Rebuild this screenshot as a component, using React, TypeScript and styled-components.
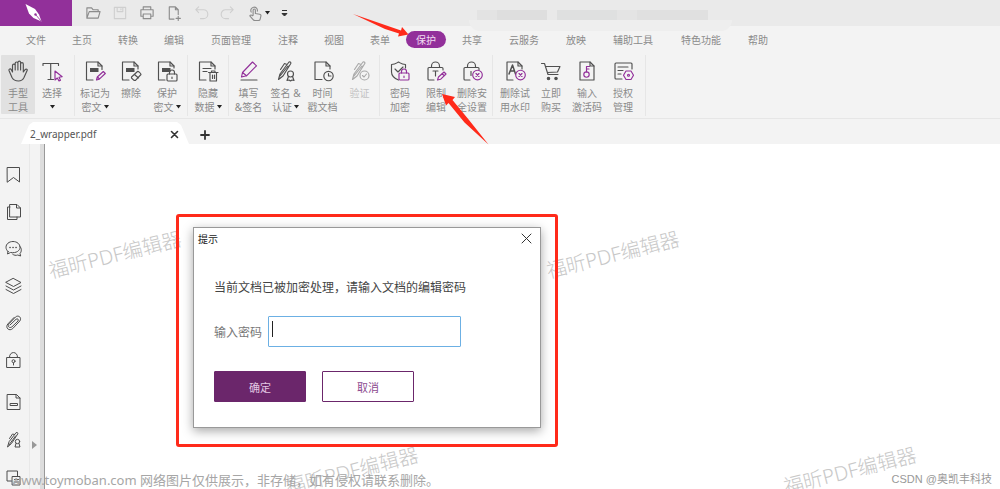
import React from "react";
import styled, { createGlobalStyle, css } from "styled-components";

const PURPLE = "#92309a";
const INK = "#505050";
const RED = "#ff2a1a";

const Global = createGlobalStyle`
  * { box-sizing: border-box; }
  body { margin: 0; background: #fff; font-family: "Noto Sans", "Noto Sans CJK SC", sans-serif; }
  button, input { font: inherit; color: inherit; }
  button { border: 0; padding: 0; background: none; }
`;

const Page = styled.div`
  position: relative;
  display: flex;
  flex-direction: column;
  height: 100vh;
  overflow: hidden;
`;

const TitleBar = styled.header`
  position: relative;
  display: flex;
  height: 26px;
  background: #eaeaea;
`;

const Brand = styled.div`
  display: flex;
  justify-content: center;
  align-items: center;
  width: 72px;
  padding-right: 4px;
  background: ${PURPLE};
`;

const QuickTools = styled.div`
  display: flex;
  align-items: center;
  gap: 11px;
  padding-left: 13px;
`;

const QuickButton = styled.button<{ $faded?: boolean }>`
  display: flex;
  align-items: center;
  gap: 2px;
  height: 16px;
  color: ${(p) => (p.$faded ? "#cfcfcf" : "#8c8c8c")};
`;

const Smudge = styled.div`
  position: absolute;
  left: 469px;
  top: 20px;
  width: 263px;
  height: 11px;
  background: #eeeeee;
  border-radius: 0 0 20px 20px;
`;

const SmudgeBlocks = styled.div`
  position: absolute;
  left: 477px;
  top: 10px;
  display: flex;
  width: 231px;
  height: 10px;
`;

const SmudgeBlock = styled.span<{ $tone: string; $grow: number }>`
  flex: ${(p) => p.$grow};
  background: ${(p) => p.$tone};
`;

const Menu = styled.nav`
  display: flex;
  align-items: center;
  height: 27px;
  padding-left: 13px;
  background: #f3f3f3;
`;

const MenuItem = styled.button<{ $active?: boolean; $long?: boolean }>`
  height: 17px;
  margin: 0 3px;
  padding: 0 ${(p) => (p.$long ? 11 : 10)}px;
  border-radius: 9px;
  font-size: 10px;
  line-height: 16px;
  white-space: nowrap;
  color: #8a8a8a;
  ${(p) => p.$active && css`background: ${PURPLE}; color: #f0dcf2;`}
`;

const Ribbon = styled.div`
  display: flex;
  height: 66px;
  padding: 2px 0 2px 1px;
  background: #f3f3f3;
  border-bottom: 1px solid #e6e6e6;
`;

const Group = styled.div<{ $pad: string; $item: number }>`
  display: flex;
  padding: ${(p) => p.$pad};
  border-right: 1px solid #e6e6e6;
  > button { width: ${(p) => p.$item}px; }
`;

const Tool = styled.button<{ $active?: boolean; $disabled?: boolean }>`
  display: flex;
  flex-direction: column;
  align-items: center;
  height: 59px;
  padding-top: 5px;
  border-radius: 1px;
  color: ${INK};
  background: ${(p) => (p.$active ? "#e1e1e1" : "none")};
  opacity: ${(p) => (p.$disabled ? 0.45 : 1)};
`;

const Label = styled.span`
  display: flex;
  align-items: center;
  gap: 2px;
  height: 14px;
  font-size: 10px;
  line-height: 14px;
  white-space: nowrap;
  color: #8a8a8a;
  &:first-of-type { margin-top: 4px; }
`;

const TabStrip = styled.div`
  display: flex;
  align-items: flex-end;
  height: 25px;
  padding-left: 21px;
  background: #f3f3f3;
`;

const Tab = styled.div`
  display: flex;
  align-items: center;
  justify-content: space-between;
  width: 168px;
  height: 22px;
  padding: 2px 10px 0 9px;
  background: #fff;
  clip-path: polygon(0 100%, 8px 3px, 12px 0, 156px 0, 160px 3px, 100% 100%);
  font-size: 10px;
  color: #555;
`;

const IconButton = styled.button`
  display: flex;
  color: #333;
`;

const NewTab = styled(IconButton)`
  margin: 0 0 4px 11px;
`;

const Work = styled.div`
  display: flex;
  flex: 1;
  min-height: 0;
`;

const SideBar = styled.aside`
  display: flex;
  flex-direction: column;
  gap: 25px;
  width: 30px;
  padding: 22px 0 0 5px;
  background: #f3f3f3;
  border-right: 1px solid #e8e8e8;
`;

const SideList = styled.div<{ $gap: number }>`
  display: flex;
  flex-direction: column;
  gap: ${(p) => p.$gap}px;
`;

const SideButton = styled(IconButton)`
  color: #4c4c4c;
`;

const Gutter = styled.div`
  display: flex;
  align-items: flex-end;
  width: 15px;
  padding: 0 0 40px 2px;
  background: #f3f3f3;
  border-right: 1px solid #999;
  box-shadow: inset -4px 0 #dddddd;
  color: #999;
`;

const Canvas = styled.main`
  position: relative;
  flex: 1;
  overflow: hidden;
  background: #fff;
`;

const Watermark = styled.span<{ $x: number; $y: number }>`
  position: absolute;
  left: ${(p) => p.$x}px;
  top: ${(p) => p.$y}px;
  font-size: 20px;
  font-weight: 300;
  line-height: 28px;
  white-space: nowrap;
  color: #c8c8c8;
  transform: translate(-50%, -50%) rotate(-14deg);
`;

const Highlight = styled.div`
  position: absolute;
  left: 131px;
  top: 70px;
  padding: 10px 14px 16px 14px;
  border: 3px solid ${RED};
  border-radius: 3px;
`;

const Dialog = styled.section`
  width: 348px;
  border: 1px solid #999;
  background: #fff;
  box-shadow: 0 3px 10px rgba(0, 0, 0, 0.35);
`;

const DialogHead = styled.div`
  display: flex;
  align-items: center;
  justify-content: space-between;
  height: 21px;
  padding: 0 8px 0 4px;
  font-size: 10px;
  color: #222;
`;

const DialogForm = styled.form`
  padding: 30px 20px 25px;
  font-size: 12px;
`;

const Message = styled.p`
  margin: 0 0 19px;
  line-height: 18px;
  white-space: nowrap;
  color: #444;
`;

const Field = styled.label`
  display: flex;
  align-items: center;
  gap: 6px;
  color: #777;
`;

const Password = styled.input`
  width: 193px;
  height: 31px;
  padding: 0 4px;
  border: 1px solid #6cb0e4;
  border-radius: 1px;
  outline: 0;
  background: transparent;
`;

const FieldBox = styled.span`
  position: relative;
  display: flex;
`;

const Caret = styled.i`
  position: absolute;
  left: 4px;
  top: 5px;
  width: 1px;
  height: 16px;
  background: #222;
`;

const Actions = styled.div`
  display: flex;
  gap: 16px;
  margin-top: 24px;
`;

const Action = styled.button<{ $primary?: boolean }>`
  width: 92px;
  height: 31px;
  border: 1px solid #6b266b;
  border-radius: 1px;
  font-size: 11px;
  background: ${(p) => (p.$primary ? "#6b266b" : "#fff")};
  color: ${(p) => (p.$primary ? "#e2c6e2" : "#8d4a8f")};
`;

const SiteNote = styled.p`
  position: absolute;
  left: 11px;
  bottom: 0;
  margin: 0;
  font-size: 13px;
  line-height: 18px;
  white-space: nowrap;
  color: #a6a6a6;
`;

const Credit = styled.p`
  position: absolute;
  right: 8px;
  bottom: 2px;
  margin: 0;
  font-family: "Liberation Sans", "Noto Sans CJK SC", sans-serif;
  font-size: 11px;
  line-height: 16px;
  white-space: nowrap;
  color: #999;
`;

const Arrow = styled.svg<{ $x: number; $y: number }>`
  position: absolute;
  left: ${(p) => p.$x}px;
  top: ${(p) => p.$y}px;
`;

type Kids = { children: React.ReactNode };

const Glyph = ({ size = 22, box = 22, w = 1.15, children }: Kids & { size?: number; box?: number; w?: number }) => (
  <svg width={size} height={size} viewBox={`0 0 ${box} ${box}`} fill="none" stroke="currentColor" strokeWidth={w} strokeLinejoin="round" strokeLinecap="round" aria-hidden>
    {children}
  </svg>
);

const Down = () => (
  <svg width="5" height="4" viewBox="0 0 5 4" aria-hidden><path d="M0 0h5L2.500 3.500z" fill="#222" /></svg>
);

const DocBase = ({ end }: { end: string }) => (
  <>
    <path d={end} />
    <path d="M14 2v4h4" />
  </>
);

const Pen = () => (
  <path d="M14 2c1.500-.5 2.500.8 1.500 2L8 16l-4.500 3.500L5 14zM12 4.500l-2.500-1-4 6M13 6l-8 10" />
);

const Rosette = () => (
  <g>
    <circle cx="15.500" cy="14" r="3" />
    <path d="m13.500 16.500-1.500 4 2-.5 1.500 1 1.500-1 2 .5-1.500-4" />
  </g>
);

const Lock = ({ x, y }: { x: number; y: number }) => (
  <g transform={`translate(${x} ${y})`}>
    <rect x="0" y="4" width="10" height="7" rx="1" />
    <path d="M2.500 4V2.500a2.500 2.500 0 0 1 5 0V4M5 7v1.500" />
  </g>
);

const BigLock = () => (
  <>
    <path d="M9 20H4a1 1 0 0 1-1-1V8.500a1 1 0 0 1 1-1h13a1 1 0 0 1 1 1V10" />
    <path d="M6.500 7.500V6a4 4 0 0 1 8 0v1.500" />
  </>
);

const CrossBadge = () => (
  <g stroke={PURPLE}>
    <circle cx="16.500" cy="15" r="4.800" />
    <path d="m15 13.500 3 3m0-3-3 3" />
  </g>
);

const icons: Record<string, React.ReactNode> = {
  hand: (
    <path d="M5.500 12V5.500a1.300 1.300 0 0 1 2.700 0V10 3.300a1.300 1.300 0 0 1 2.700 0V10 2.500a1.300 1.300 0 0 1 2.700 0V10 4a1.300 1.300 0 0 1 2.700 0v8l1.800-2.300c1-1.200 2.700-.4 2 .9L17 17.500c-1 2-2.600 3.500-5.500 3.500-3.500 0-5.200-1.200-6.500-3.500L2 10.500c-.5-1.500 1.500-2.300 2.200-1L5.500 12" />
  ),
  select: (
    <>
      <path d="M2 5.500V3.500h15.500v2M9.700 3.500v16M7 19.500h5.500" />
      <path d="M14 11v9l2.300-2 1.700 3 1.500-.8-1.500-2.900 3.200-.6z" stroke={PURPLE} />
    </>
  ),
  mark: (
    <>
      <DocBase end="M9 20H2.500V2H14l4 4v3.500" />
      <path d="M6 8h8.500v4H6z" fill={INK} stroke="none" />
      <path d="m12.500 20 .8-3 6-5.500 2 2-6 5.700zM13.500 17l2 2" stroke={PURPLE} />
    </>
  ),
  erase: (
    <>
      <DocBase end="M9 20H2.500V2H14l4 4v3" />
      <path d="M6 8h8.500v4H6z" fill={INK} stroke="none" />
      <path d="m11.500 17 6-5.500c.7-.6 3.500 2 3.500 3l-5.500 5.800h-1.500l-2.500-2.300zM14.500 14.500l4 3.500" />
    </>
  ),
  guard: (
    <>
      <DocBase end="M9 20H2.500V2H14l4 4v2" />
      <path d="M6 8h8.500v4H6z" fill={INK} stroke="none" />
      <Lock x={11} y={10} />
    </>
  ),
  hide: (
    <>
      <DocBase end="M9 20H2.500V2H14l4 4v3" />
      <path d="M6 8.500h8M6 11.500h4M11.500 12.500h9.500M14.500 12.500V11h3.500v1.500M13 12.500V21h6.500v-8.500M15.500 15v3.500M17.500 15v3.500" />
    </>
  ),
  fill: (
    <>
      <path d="m3.500 17 1-4.500 10-10.500 4 3.800-10 10zM4.500 12.500l4 3.300" stroke={PURPLE} />
      <path d="M3 20h16" />
    </>
  ),
  sign: (
    <>
      <Pen />
      <Rosette />
    </>
  ),
  time: (
    <>
      <DocBase end="M10 19.500H3V2h11l4 4v3" />
      <circle cx="16.500" cy="16" r="4.700" />
      <path d="M16.500 13.500V16H19" />
    </>
  ),
  verify: (
    <>
      <Pen />
      <circle cx="15.500" cy="15.500" r="4.500" />
      <path d="m13.500 15.500 1.500 1.500 2.500-3" />
    </>
  ),
  shield: (
    <>
      <path d="M9.500 20C4.500 18 2.500 16 2.500 12V4.500C6 4.500 7 3.500 9.500 2 12 3.500 13 4.500 16.500 4.500V8M6 9l3 3 5-5" />
      <g stroke={PURPLE}><Lock x={10} y={9} /></g>
    </>
  ),
  limit: (
    <>
      <BigLock />
      <path d="M8 11h5M10.500 11v5" />
      <path d="m12.500 20 1-3 5.500-5 2 2-5.500 5.300zM17 13.500l2 2" stroke={PURPLE} />
    </>
  ),
  unlock: (
    <>
      <BigLock />
      <path d="M10 11.500v4" />
      <CrossBadge />
    </>
  ),
  unmark: (
    <>
      <DocBase end="M9 20H3V2h11l4 4v3" />
      <path d="m5 14 3.500-9 3 9M6.500 11h4" strokeWidth="1.500" />
      <CrossBadge />
    </>
  ),
  cart: (
    <>
      <path d="M1.500 3.500h3L8 14.500h10M5.500 6.500H20l-2.500 5.500-10 .5" />
      <circle cx="8.500" cy="18.500" r="1.200" fill="currentColor" />
      <circle cx="16" cy="18.500" r="1.200" fill="currentColor" />
    </>
  ),
  key: (
    <>
      <DocBase end="M14 2H4v18h14V6z" />
      <path d="M10.500 12V6.500h3M10.500 9h2.500" stroke={PURPLE} />
      <circle cx="10.500" cy="14.500" r="2.700" stroke={PURPLE} />
    </>
  ),
  license: (
    <>
      <path d="M10 19H4a1 1 0 0 1-1-1V4a1 1 0 0 1 1-1h15a1 1 0 0 1 1 1v5M6 7h10M6 10.500h5M6 14h3" />
      <path d="m14 11 5 0 2.500 4.200L19 19.500h-5l-2.500-4.300z" stroke={PURPLE} />
      <circle cx="16.500" cy="15.200" r="1" stroke={PURPLE} />
    </>
  ),
  bookmark: <path d="M2.500 1.500h12v14.500l-6-4.500-6 4.500z" />,
  pages: (
    <>
      <path d="M5 1.500h7l3.500 3.500v9H5zM11.500 1.500V5h4" />
      <path d="M5 4H2.500v12.500H12V14" />
    </>
  ),
  chat: (
    <>
      <path d="M3 11.500 2.500 14l3-1.500c6 1 9.500-2 9.500-5.200S12 1.500 8 1.500 1 4 1 7.300c0 1.800 1 3.200 2 4.200z" />
      <path d="M15 6.500c2 2 1.500 5.500 0 7l.7 2.500-3-1c-1.700.7-3.700.3-5-.7" />
      <path d="M5 7.500h.1M8 7.500h.1M11 7.500h.1" strokeWidth="1.600" />
    </>
  ),
  layers: <path d="m8.500 1.500 7.500 4-7.500 4-7.500-4zM1 9l7.500 4L16 9M1 12.500l7.500 4 7.500-4" />,
  clip: <path d="M5 11 11 5.300c1.500-1.300 3 .3 2 1.700L7 12.800c-2.500 2-5-.5-3-3L10.500 3c3-2.500 6.700.8 4.300 4l-7 7.500c-3.500 3.300-8-.7-5-4.500L9 3.500" />,
  padlock: (
    <>
      <path d="M2 6.500h13v10H2zM4.500 6.500c-.5-6.700 8.500-6.700 8 0" />
      <circle cx="8.500" cy="10.200" r="1.500" />
      <path d="M8.500 12v2" />
    </>
  ),
  form: <path d="M2.500 1.500h9l3.500 3.500v11.500H2.500zM11 1.500V5h4M5.500 10.500h7v2h-7z" />,
  sideSign: (
    <>
      <path d="M11.500 1.500c1-.3 1.700.5 1.200 1.500L6.500 12.500 2.500 16 4 11zM9.500 3.500 7.500 3 4.500 7.500M10.500 5 4 14" />
      <circle cx="12.500" cy="10.500" r="2.200" />
      <path d="m11 12.500-1 3.500h5l-1-3.500" />
    </>
  ),
  compare: (
    <>
      <path d="M7 12H2V2h10.500v5" />
      <path d="M7.500 7.500h7.500v8.500H7.500zM9.500 10.500h4M9.500 13h4" />
    </>
  ),
  folder: <path d="M2 14V3h5l1.500 2H14v2M2 14 4.500 7H16l-2 7z" />,
  save: <path d="M2.500 2.500h12v12h-12zM5.500 2.500V7h6V2.500M9.500 4v1" />,
  print: <path d="M4.500 5V2h8v3M4.500 12H2V5h13v7h-2.500M4.500 9.500h8v5h-8z" />,
  newDoc: <path d="M8.500 15H3.500V2H10l3 3v5M10 2v3h3M13 12v4.500M10.700 14.200h4.600" />,
  undo: <path d="M3.500 5H11a4.500 4.500 0 0 1 0 9.500H8M6 2 3 5l3 3" />,
  redo: <path d="M13.500 5H6a4.500 4.500 0 0 0 0 9.500h3M11 2l3 3-3 3" />,
  touch: <path d="M6.500 11V5.500a1.200 1.200 0 0 1 2.400 0V9l4.500.8c1 .2 1.600.8 1.400 1.700l-.8 3.500c-.2 1-1 1.500-2 1.500H8.500c-.8 0-1.500-.4-2-1L3 11.500c.6-1.200 2-1 2.700-.2zM4.500 7.500a3.500 3.500 0 1 1 6.500-1" />,
};

const menu = ["文件", "主页", "转换", "编辑", "页面管理", "注释", "视图", "表单", "保护", "共享", "云服务", "放映", "辅助工具", "特色功能", "帮助"];

type ToolSpec = { icon: string; top: string; bottom?: string; drop?: boolean; active?: boolean; disabled?: boolean };

const groups: { pad: string; item: number; tools: ToolSpec[] }[] = [
  { pad: "0 5px 0 0", item: 34, tools: [{ icon: "hand", top: "手型", bottom: "工具", active: true }, { icon: "select", top: "选择", drop: true }] },
  { pad: "0 2px", item: 36, tools: [{ icon: "mark", top: "标记为", bottom: "密文", drop: true }, { icon: "erase", top: "擦除" }, { icon: "guard", top: "保护", bottom: "密文", drop: true }] },
  { pad: "0 2px", item: 36, tools: [{ icon: "hide", top: "隐藏", bottom: "数据", drop: true }] },
  { pad: "0 1px", item: 37, tools: [{ icon: "fill", top: "填写", bottom: "&签名" }, { icon: "sign", top: "签名 &", bottom: "认证", drop: true }, { icon: "time", top: "时间", bottom: "戳文档" }, { icon: "verify", top: "验证", disabled: true }] },
  { pad: "0 2px", item: 36, tools: [{ icon: "shield", top: "密码", bottom: "加密" }, { icon: "limit", top: "限制", bottom: "编辑" }, { icon: "unlock", top: "删除安", bottom: "全设置" }] },
  { pad: "0 4px", item: 36, tools: [{ icon: "unmark", top: "删除试", bottom: "用水印" }, { icon: "cart", top: "立即", bottom: "购买" }, { icon: "key", top: "输入", bottom: "激活码" }, { icon: "license", top: "授权", bottom: "管理" }] },
];

const quick = [
  { icon: "folder", name: "打开" },
  { icon: "save", name: "保存", faded: true },
  { icon: "print", name: "打印" },
  { icon: "newDoc", name: "新建" },
  { icon: "undo", name: "撤销", faded: true },
  { icon: "redo", name: "重做", faded: true },
  { icon: "touch", name: "触摸模式", drop: true },
];

const Side = ({ name }: { name: string }) => (
  <SideButton aria-label={name}>
    <Glyph size={17} box={17} w={1}>{icons[name]}</Glyph>
  </SideButton>
);

export default function App() {
  return (
    <Page>
      <Global />
      <TitleBar>
        <Brand>
          <svg width="20" height="20" viewBox="0 0 20 20" aria-label="Foxit">
            <path d="M1.500 1 11 6l4 5.500 2.500 7L9.500 15 5 10.500z" fill="#fff" />
            <path d="m17 18-5-6" stroke={PURPLE} strokeWidth="0.800" />
            <circle cx="11.500" cy="11.500" r="1.200" fill={PURPLE} />
          </svg>
        </Brand>
        <QuickTools>
          {quick.map((q) => (
            <QuickButton key={q.icon} $faded={q.faded} aria-label={q.name}>
              <Glyph size={16} box={17} w={1.2}>{icons[q.icon]}</Glyph>
              {q.drop && <Down />}
            </QuickButton>
          ))}
          <QuickButton aria-label="自定义">
            <svg width="7" height="8" viewBox="0 0 7 8" aria-hidden><path d="M1 1.500h5M1 4.500h5L3.500 7z" stroke="#333" strokeWidth="1" fill="#333" /></svg>
          </QuickButton>
        </QuickTools>
        <SmudgeBlocks>
          <SmudgeBlock $grow={20} $tone="#e3e3e3" />
          <SmudgeBlock $grow={50} $tone="#dedede" />
          <SmudgeBlock $grow={10} $tone="#e9e9e9" />
          <SmudgeBlock $grow={60} $tone="#dfe0e0" />
          <SmudgeBlock $grow={20} $tone="#e4e4e4" />
          <SmudgeBlock $grow={71} $tone="#e0e0e0" />
        </SmudgeBlocks>
        <Smudge />
      </TitleBar>
      <Menu>
        {menu.map((m) => <MenuItem key={m} $active={m === "保护"} $long={m.length > 2}>{m}</MenuItem>)}
      </Menu>
      <Ribbon>
        {groups.map((g, i) => (
          <Group key={i} $pad={g.pad} $item={g.item}>
            {g.tools.map((t) => (
              <Tool key={t.icon} $active={t.active} $disabled={t.disabled}>
                <Glyph>{icons[t.icon]}</Glyph>
                <Label>{t.top}</Label>
                <Label>{t.bottom}{t.drop && <Down />}</Label>
              </Tool>
            ))}
          </Group>
        ))}
      </Ribbon>
      <TabStrip>
        <Tab>
          2_wrapper.pdf
          <IconButton aria-label="关闭标签">
            <Glyph size={9} box={9} w={1.6}><path d="m1.500 1.500 6 6m0-6-6 6" /></Glyph>
          </IconButton>
        </Tab>
        <NewTab aria-label="新标签">
          <Glyph size={10} box={10} w={1.8}><path d="M5 1v8M1 5h8" /></Glyph>
        </NewTab>
      </TabStrip>
      <Work>
        <SideBar>
          <SideList $gap={20}>
            {["bookmark", "pages", "chat", "layers", "clip", "padlock"].map((n) => <Side key={n} name={n} />)}
          </SideList>
          <SideList $gap={21}>
            {["form", "sideSign", "compare"].map((n) => <Side key={n} name={n} />)}
          </SideList>
        </SideBar>
        <Gutter>
          <svg width="5" height="8" viewBox="0 0 5 8" aria-hidden><path d="M0 0v8l5-4z" fill="currentColor" /></svg>
        </Gutter>
        <Canvas>
          <Watermark $x={70} $y={111}>福昕PDF编辑器</Watermark>
          <Watermark $x={568} $y={111}>福昕PDF编辑器</Watermark>
          <Watermark $x={307} $y={327}>福昕PDF编辑器</Watermark>
          <Watermark $x={805} $y={327}>福昕PDF编辑器</Watermark>
          <Highlight>
            <Dialog role="dialog" aria-labelledby="prompt-title">
              <DialogHead>
                <span id="prompt-title">提示</span>
                <IconButton aria-label="关闭">
                  <Glyph size={11} box={11} w={1}><path d="m1 1 9 9m0-9-9 9" /></Glyph>
                </IconButton>
              </DialogHead>
              <DialogForm>
                <Message>当前文档已被加密处理，请输入文档的编辑密码</Message>
                <Field>
                  输入密码
                  <FieldBox>
                    <Password type="password" />
                    <Caret />
                  </FieldBox>
                </Field>
                <Actions>
                  <Action type="button" $primary>确定</Action>
                  <Action type="button">取消</Action>
                </Actions>
              </DialogForm>
            </Dialog>
          </Highlight>
        </Canvas>
      </Work>
      <Arrow $x={350} $y={10} width="62" height="32" viewBox="0 0 62 32" aria-hidden>
        <path d="M3 4 51 20.500 52 17l6.500 7.500L48 26.500l1-3-14-4.500z" fill={RED} />
      </Arrow>
      <Arrow $x={438} $y={90} width="54" height="58" viewBox="0 0 54 58" aria-hidden>
        <path d="M4 4 17 7l-2.500 3L31 30 50.500 54.500 26.500 32.500 10.500 13 8 15.500z" fill={RED} />
      </Arrow>
      <SiteNote>www.toymoban.com 网络图片仅供展示，非存储，如有侵权请联系删除。</SiteNote>
      <Credit>CSDN @奥凯丰科技</Credit>
    </Page>
  );
}
